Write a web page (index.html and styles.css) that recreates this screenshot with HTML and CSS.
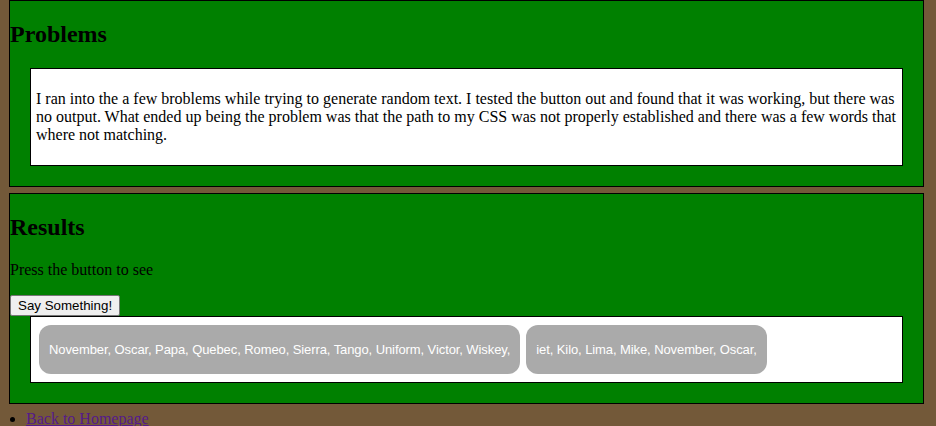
FILE: index.html
```html
<!DOCTYPE html>
<html>
<head>
<meta charset="utf-8">
<title>Problems</title>
<link rel="stylesheet" href="styles.css">
</head>
<body>
<section class="panel">
  <h2 class="title">Problems</h2>
  <div class="box">
    <p class="para">I ran into the a few broblems while trying to generate random text. I tested the button out and found that it was working, but there was no output. What ended up being the problem was that the path to my CSS was not properly established and there was a few words that where not matching.</p>
  </div>
</section>
<section class="panel">
  <h2 class="title">Results</h2>
  <p class="para">Press the button to see</p>
  <button class="btn" type="button">Say Something!</button>
  <div class="box output">
    <span class="pill">November, Oscar, Papa, Quebec, Romeo, Sierra, Tango, Uniform, Victor, Wiskey,</span>
    <span class="pill">iet, Kilo, Lima, Mike, November, Oscar,</span>
  </div>
</section>
<ul class="links">
  <li><a class="link" href="#">Back to Homepage</a></li>
</ul>
</body>
</html>
```

FILE: styles.css
```css
html {
  background: #735939;
}
body {
  margin: 0;
  background: #735939;
  font-family: "Liberation Serif", "Times New Roman", serif;
  font-size: 16px;
  color: #000;
}
.panel {
  box-sizing: border-box;
  width: 915px;
  margin: 0 0 6px 9px;
  background: #008000;
  border: 1px solid #000;
  display: flow-root;
}
.title {
  font-size: 24px;
  font-weight: bold;
  margin: 20px 0;
  line-height: 27px;
}
.para {
  margin: 16px 0;
  line-height: 18px;
}
.box {
  margin: 20px 20px;
  background: #fff;
  border: 1px solid #000;
  padding: 5px;
  display: flow-root;
}
.btn {
  display: block;
  margin: 0;
  font-family: "Liberation Sans", Arial, sans-serif;
  font-size: 13.33px;
  height: 21px;
  padding: 1px 7px;
  color: #000;
  background: #efefef;
  border: 1px solid #767676;
  border-radius: 2px;
}
.output {
  margin-top: 0;
  display: flex;
  gap: 6px;
  padding: 8px;
}
.pill {
  display: flex;
  align-items: center;
  height: 49px;
  padding: 0 10px;
  background: #aaaaaa;
  color: #fff;
  border-radius: 12px;
  font-family: "Liberation Sans", Arial, sans-serif;
  font-size: 13px;
  letter-spacing: -0.09px;
  white-space: nowrap;
}
.links {
  margin: 0;
  padding-left: 26px;
  line-height: 18px;
}
.link {
  color: #551a8b;
}
```
